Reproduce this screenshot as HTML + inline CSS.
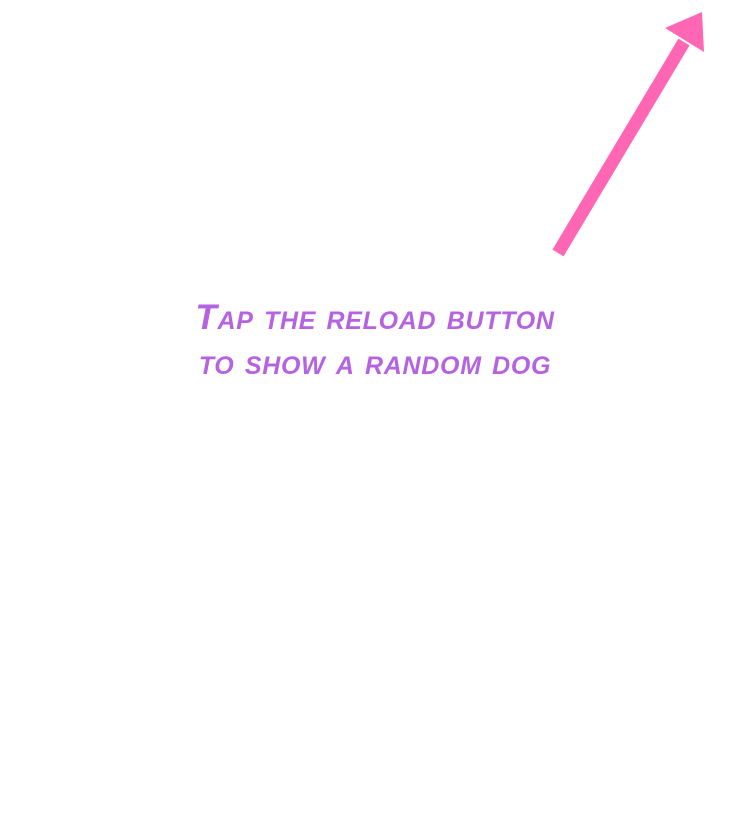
<!DOCTYPE html>
<html><head><style>
html,body{margin:0;padding:0;background:#fff;width:750px;height:822px;overflow:hidden;position:relative}
.t{position:absolute;left:125px;width:500px;text-align:center;font-family:"Liberation Sans",sans-serif;font-weight:bold;font-style:italic;font-variant:small-caps;text-transform:lowercase;color:#b563e0;font-size:35px;line-height:45px;top:295px;letter-spacing:0.7px}
.t .c{text-transform:none}
</style></head><body>
<svg width="750" height="822" style="position:absolute;left:0;top:0">
<line x1="558" y1="253" x2="684" y2="42" stroke="#ff66b3" stroke-width="13"/>
<polygon points="665,28 702,12 704,52" fill="#ff66b3"/>
</svg>
<div class="t"><span class="c">T</span>ap the reload button<br>to show a random dog</div>
</body></html>
